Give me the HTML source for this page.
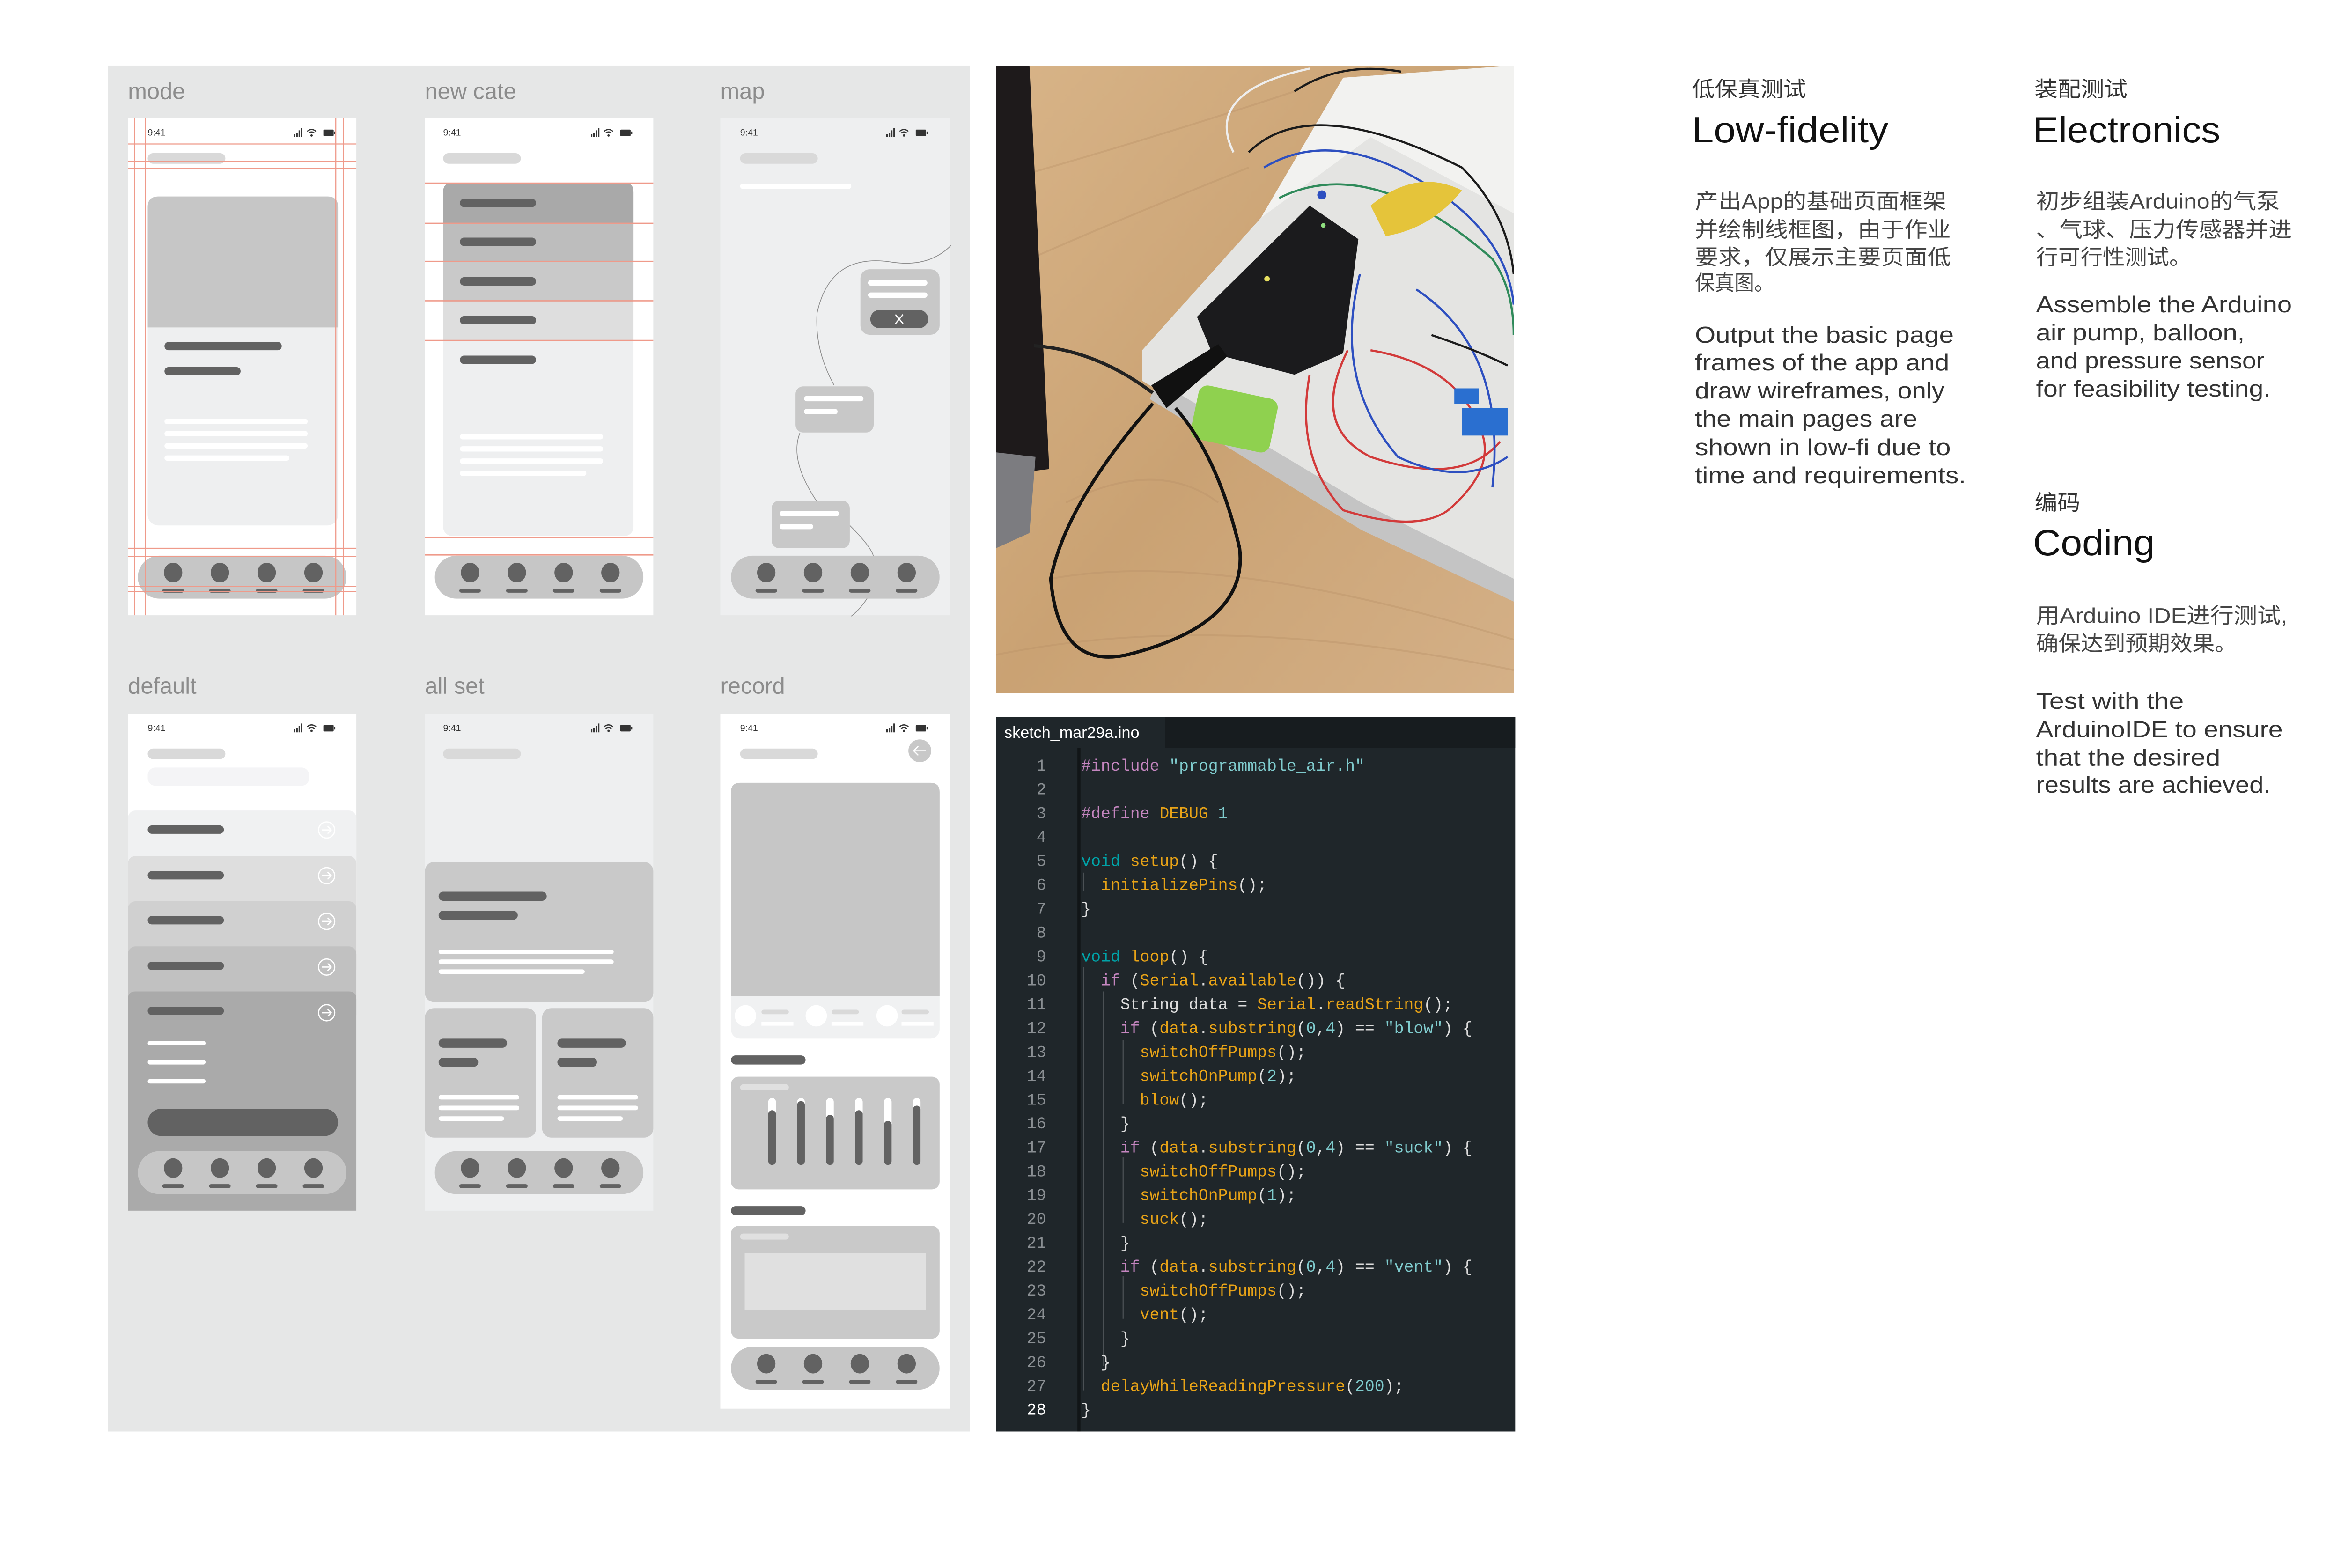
<!DOCTYPE html>
<html><head><meta charset="utf-8"><style>
html,body{margin:0;padding:0;background:#fff;width:5100px;height:3349px;overflow:hidden}
svg{display:block}
.lb{font-family:"Liberation Sans",sans-serif;font-size:15px;fill:#8c8c8c}
.st{font-family:"Liberation Sans",sans-serif;font-size:6px;fill:#333}
.cd{font-family:"Liberation Mono","DejaVu Sans Mono",monospace;font-size:10.7px;fill:#dcdcdc;white-space:pre}
.cd text{white-space:pre}
.ln{font-family:"Liberation Mono","DejaVu Sans Mono",monospace;font-size:10.7px;fill:#8a8f93;text-anchor:end}
.k{fill:#c586c0}.v{fill:#00a3a8}.f{fill:#e8a317}.s{fill:#7fcbcd}
.h{font-family:"Liberation Sans","Noto Sans CJK SC",sans-serif;font-size:14px;fill:#333}
.t{font-family:"Liberation Sans",sans-serif;font-size:24px;fill:#111}
.c{font-family:"Liberation Sans","Noto Sans CJK SC",sans-serif;font-size:14px;fill:#444}
.e{font-family:"Liberation Sans",sans-serif;font-size:15px;fill:#333}
</style></head><body>
<svg width="5100" height="3349" viewBox="0 0 1568 1029.6" xmlns="http://www.w3.org/2000/svg">
<defs>
<symbol id="ic" viewBox="0 0 30 6">
<rect x="0" y="4" width="1" height="2" fill="#333"/><rect x="1.6" y="3" width="1" height="3" fill="#333"/><rect x="3.2" y="1.5" width="1" height="4.5" fill="#333"/><rect x="4.8" y="0" width="1" height="6" fill="#333"/>
<path d="M9 2.2 Q12 -0.3 15 2.2 M10 3.4 Q12 1.8 14 3.4" stroke="#333" stroke-width="0.8" fill="none"/><circle cx="12" cy="5" r="0.8" fill="#333"/>
<rect x="20" y="1" width="7" height="4.4" fill="#333" rx="0.6"/><rect x="27.3" y="2.3" width="0.8" height="1.8" fill="#333"/>
</symbol>
<symbol id="tb" viewBox="0 0 136 28">
<rect x="0" y="0" width="136" height="28" rx="14" fill="#c6c6c6"/>
<g fill="#626262"><ellipse cx="23" cy="11" rx="6" ry="6.4"/><ellipse cx="53.5" cy="11" rx="6" ry="6.4"/><ellipse cx="84" cy="11" rx="6" ry="6.4"/><ellipse cx="114.5" cy="11" rx="6" ry="6.4"/>
<rect x="16" y="21.5" width="14" height="2.6" rx="1.3"/><rect x="46.5" y="21.5" width="14" height="2.6" rx="1.3"/><rect x="77" y="21.5" width="14" height="2.6" rx="1.3"/><rect x="107.5" y="21.5" width="14" height="2.6" rx="1.3"/></g>
</symbol>
<symbol id="ar" viewBox="0 0 12 12"><circle cx="6" cy="6" r="5.3" fill="none" stroke="#fff" stroke-width="0.8"/><path d="M3 6 H9 M6.6 3.6 L9 6 L6.6 8.4" fill="none" stroke="#fff" stroke-width="0.8"/></symbol>
<linearGradient id="wood" x1="0" y1="0" x2="1" y2="1"><stop offset="0" stop-color="#d8b488"/><stop offset="0.5" stop-color="#caa273"/><stop offset="1" stop-color="#d4b087"/></linearGradient>
</defs>
<rect x="0" y="0" width="1568" height="1030" fill="#fff"/>
<rect x="71" y="43" width="566" height="897" fill="#e6e7e7"/>
<text class="lb" x="84" y="65">mode</text><text class="lb" x="279" y="65">new cate</text><text class="lb" x="473" y="65">map</text>
<text class="lb" x="84" y="455.5">default</text><text class="lb" x="279" y="455.5">all set</text><text class="lb" x="473" y="455.5">record</text>

<g>
<rect x="84" y="77.5" width="150" height="326.5" fill="#fff"/>
<text class="st" x="97" y="89">9:41</text><use href="#ic" x="193" y="84" width="29" height="6"/>
<rect x="97" y="100.5" width="51" height="7" rx="3.5" fill="#d9d9d9"/>
<rect x="97" y="129" width="125" height="216" rx="7" fill="#eeeff0"/>
<path d="M97 215 V136 Q97 129 104 129 H215 Q222 129 222 136 V215 Z" fill="#c6c6c6"/>
<rect x="108" y="224.5" width="77" height="5.5" rx="2.7" fill="#626262"/>
<rect x="108" y="241" width="50" height="5.5" rx="2.7" fill="#626262"/>
<g fill="#fff"><rect x="108" y="275" width="94" height="3.5" rx="1.7"/><rect x="108" y="283" width="94" height="3.5" rx="1.7"/><rect x="108" y="291" width="94" height="3.5" rx="1.7"/><rect x="108" y="299" width="82" height="3.5" rx="1.7"/></g>
<use href="#tb" x="90.5" y="364.5" width="137" height="29"/>
<g stroke="#ef9a8a" stroke-width="0.7"><line x1="88.5" y1="77.5" x2="88.5" y2="404"/><line x1="95.5" y1="77.5" x2="95.5" y2="404"/><line x1="220.5" y1="77.5" x2="220.5" y2="404"/><line x1="225.5" y1="77.5" x2="225.5" y2="404"/>
<line x1="84" y1="94.5" x2="234" y2="94.5"/><line x1="84" y1="106" x2="234" y2="106"/><line x1="84" y1="110.5" x2="234" y2="110.5"/><line x1="84" y1="360" x2="234" y2="360"/><line x1="84" y1="365.5" x2="234" y2="365.5"/><line x1="84" y1="385" x2="234" y2="385"/><line x1="84" y1="388.5" x2="234" y2="388.5"/></g>
</g>

<g>
<rect x="279" y="77.5" width="150" height="326.5" fill="#fff"/>
<text class="st" x="291" y="89">9:41</text><use href="#ic" x="388" y="84" width="29" height="6"/>
<rect x="291" y="100.5" width="51" height="7" rx="3.5" fill="#d9d9d9"/>
<rect x="291" y="120" width="125" height="232" rx="6" fill="#eeeff0"/>
<path d="M291 224 V126 Q291 120 297 120 H410 Q416 120 416 126 V224 Z" fill="#dedede"/>
<path d="M291 198 V126 Q291 120 297 120 H410 Q416 120 416 126 V198 Z" fill="#c9c9c9"/>
<path d="M291 172 V126 Q291 120 297 120 H410 Q416 120 416 126 V172 Z" fill="#bdbdbd"/>
<path d="M291 146.5 V126 Q291 120 297 120 H410 Q416 120 416 126 V146.5 Z" fill="#a9a9a9"/>
<g fill="#626262"><rect x="302" y="130.5" width="50" height="5.5" rx="2.7"/><rect x="302" y="156" width="50" height="5.5" rx="2.7"/><rect x="302" y="182" width="50" height="5.5" rx="2.7"/><rect x="302" y="207.5" width="50" height="5.5" rx="2.7"/><rect x="302" y="233.5" width="50" height="5.5" rx="2.7"/></g>
<g fill="#fff"><rect x="302" y="285" width="94" height="3.5" rx="1.7"/><rect x="302" y="293" width="94" height="3.5" rx="1.7"/><rect x="302" y="301" width="94" height="3.5" rx="1.7"/><rect x="302" y="309" width="83" height="3.5" rx="1.7"/></g>
<use href="#tb" x="285.5" y="364.5" width="137" height="29"/>
<g stroke="#ef9a8a" stroke-width="0.8"><line x1="279" y1="120.2" x2="429" y2="120.2"/><line x1="279" y1="146.6" x2="429" y2="146.6"/><line x1="279" y1="171.6" x2="429" y2="171.6"/><line x1="279" y1="197.5" x2="429" y2="197.5"/><line x1="279" y1="223.5" x2="429" y2="223.5"/><line x1="279" y1="353" x2="429" y2="353"/><line x1="279" y1="364.4" x2="429" y2="364.4"/></g>
</g>

<g>
<rect x="473" y="77.5" width="151" height="326.5" fill="#eeeff0"/>
<text class="st" x="486" y="89">9:41</text><use href="#ic" x="582" y="84" width="29" height="6"/>
<rect x="486" y="100.5" width="51" height="7" rx="3.5" fill="#d9d9d9"/>
<rect x="486" y="120.5" width="73" height="3.5" rx="1.7" fill="#fff"/>
<path d="M624.6 161 Q610 176 585 172 Q545 166 536.5 205.7 Q535 230 547.6 252.7 M525.4 284 Q518 302 536.5 329.4 M558 345 Q573 360 573.7 366 M570 392 Q565 400 559 404.6" fill="none" stroke="#8d8d8d" stroke-width="0.5"/>
<rect x="565" y="176.8" width="52" height="43" rx="6" fill="#c8c8c8"/>
<rect x="570" y="184" width="39" height="3.5" rx="1.7" fill="#fff"/><rect x="570" y="192" width="39" height="3.5" rx="1.7" fill="#fff"/>
<rect x="571.5" y="203.5" width="38" height="12" rx="6" fill="#626262"/>
<path d="M588 206.5 L593 212.5 M593 206.5 L588 212.5" stroke="#fff" stroke-width="0.8"/>
<rect x="522.4" y="253.7" width="51.3" height="30.3" rx="5" fill="#c8c8c8"/>
<rect x="528" y="260" width="39" height="3.5" rx="1.7" fill="#fff"/><rect x="528" y="268.5" width="22" height="3.5" rx="1.7" fill="#fff"/>
<rect x="506.7" y="328.7" width="51.3" height="31.3" rx="5" fill="#c8c8c8"/>
<rect x="512" y="335.5" width="39" height="3.5" rx="1.7" fill="#fff"/><rect x="512" y="344" width="22" height="3.5" rx="1.7" fill="#fff"/>
<use href="#tb" x="480" y="364.5" width="137" height="29"/>
</g>

<g>
<rect x="84" y="469" width="150" height="326" fill="#fff"/>
<text class="st" x="97" y="480">9:41</text><use href="#ic" x="193" y="475" width="29" height="6"/>
<rect x="97" y="491.5" width="51" height="7" rx="3.5" fill="#d9d9d9"/>
<rect x="97" y="504" width="106" height="12" rx="5" fill="#f4f4f6"/>
<rect x="84" y="532.2" width="150" height="50" rx="5" fill="#f0f1f2"/>
<rect x="84" y="562" width="150" height="50" rx="5" fill="#dedede"/>
<rect x="84" y="591.8" width="150" height="50" rx="5" fill="#d0d0d0"/>
<rect x="84" y="621.4" width="150" height="50" rx="5" fill="#c1c1c1"/>
<path d="M84 795 V656 Q84 651 89 651 H229 Q234 651 234 656 V795 Z" fill="#aaaaaa"/>
<g fill="#626262"><rect x="97" y="542" width="50" height="5.5" rx="2.7"/><rect x="97" y="572" width="50" height="5.5" rx="2.7"/><rect x="97" y="601.5" width="50" height="5.5" rx="2.7"/><rect x="97" y="631.5" width="50" height="5.5" rx="2.7"/><rect x="97" y="661" width="50" height="5.5" rx="2.7"/></g>
<use href="#ar" x="208.5" y="539" width="12" height="12"/><use href="#ar" x="208.5" y="569" width="12" height="12"/><use href="#ar" x="208.5" y="599" width="12" height="12"/><use href="#ar" x="208.5" y="629" width="12" height="12"/><use href="#ar" x="208.5" y="659" width="12" height="12"/>
<g fill="#fff"><rect x="97" y="683.5" width="38" height="3" rx="1.5"/><rect x="97" y="696" width="38" height="3" rx="1.5"/><rect x="97" y="708.5" width="38" height="3" rx="1.5"/></g>
<rect x="97" y="728" width="125" height="18" rx="9" fill="#626262"/>
<use href="#tb" x="90.5" y="755.5" width="137" height="29"/>
</g>

<g>
<rect x="279" y="469" width="150" height="326" fill="#eeeff0"/>
<text class="st" x="291" y="480">9:41</text><use href="#ic" x="388" y="475" width="29" height="6"/>
<rect x="291" y="491.5" width="51" height="7" rx="3.5" fill="#d9d9d9"/>
<rect x="279" y="566" width="150" height="92" rx="6" fill="#c9c9c9"/>
<rect x="288" y="585.5" width="71" height="6" rx="3" fill="#626262"/><rect x="288" y="598" width="52" height="6" rx="3" fill="#626262"/>
<g fill="#fff"><rect x="288" y="623.5" width="115" height="3" rx="1.5"/><rect x="288" y="630" width="115" height="3" rx="1.5"/><rect x="288" y="636.5" width="96" height="3" rx="1.5"/></g>
<rect x="279" y="662" width="73" height="85" rx="6" fill="#c9c9c9"/><rect x="356" y="662" width="73" height="85" rx="6" fill="#c9c9c9"/>
<g fill="#626262"><rect x="288" y="682" width="45" height="6" rx="3"/><rect x="288" y="694.5" width="26" height="6" rx="3"/><rect x="366" y="682" width="45" height="6" rx="3"/><rect x="366" y="694.5" width="26" height="6" rx="3"/></g>
<g fill="#fff"><rect x="288" y="719" width="53" height="3" rx="1.5"/><rect x="288" y="726" width="53" height="3" rx="1.5"/><rect x="288" y="733" width="43" height="3" rx="1.5"/><rect x="366" y="719" width="53" height="3" rx="1.5"/><rect x="366" y="726" width="53" height="3" rx="1.5"/><rect x="366" y="733" width="43" height="3" rx="1.5"/></g>
<use href="#tb" x="285.5" y="755.5" width="137" height="29"/>
</g>

<g>
<rect x="473" y="469" width="151" height="456" fill="#fff"/>
<text class="st" x="486" y="480">9:41</text><use href="#ic" x="582" y="475" width="29" height="6"/>
<rect x="486" y="491.5" width="51" height="7" rx="3.5" fill="#d9d9d9"/>
<circle cx="604" cy="493" r="7.5" fill="#c8c8c8"/><path d="M600 493 H608 M603 490 L600 493 L603 496" stroke="#fff" stroke-width="0.8" fill="none"/>
<rect x="480" y="514" width="137" height="168" rx="6" fill="#f0f1f2"/>
<path d="M480 654 V520 Q480 514 486 514 H611 Q617 514 617 520 V654 Z" fill="#c6c6c6"/>
<g fill="#fff"><circle cx="489.5" cy="667" r="7"/><circle cx="536" cy="667" r="7"/><circle cx="582.5" cy="667" r="7"/>
<rect x="500" y="671" width="21" height="2.5"/><rect x="546" y="671" width="21" height="2.5"/><rect x="592" y="671" width="21" height="2.5"/></g>
<g fill="#d9d9d9"><rect x="500" y="663" width="18" height="3" rx="1.5"/><rect x="546" y="663" width="18" height="3" rx="1.5"/><rect x="592" y="663" width="18" height="3" rx="1.5"/></g>
<rect x="480" y="693" width="49" height="6" rx="3" fill="#626262"/>
<rect x="480" y="707" width="137" height="74" rx="5" fill="#c9c9c9"/>
<rect x="486" y="712" width="32" height="4" rx="2" fill="#e0e0e0"/>
<g><rect x="504.5" y="721" width="5" height="44" rx="2.5" fill="#fff"/><rect x="504.5" y="729" width="5" height="36" rx="2.5" fill="#626262"/>
<rect x="523.5" y="721" width="5" height="44" rx="2.5" fill="#fff"/><rect x="523.5" y="723" width="5" height="42" rx="2.5" fill="#626262"/>
<rect x="542.5" y="721" width="5" height="44" rx="2.5" fill="#fff"/><rect x="542.5" y="732" width="5" height="33" rx="2.5" fill="#626262"/>
<rect x="561.5" y="721" width="5" height="44" rx="2.5" fill="#fff"/><rect x="561.5" y="729" width="5" height="36" rx="2.5" fill="#626262"/>
<rect x="580.5" y="721" width="5" height="44" rx="2.5" fill="#fff"/><rect x="580.5" y="736" width="5" height="29" rx="2.5" fill="#626262"/>
<rect x="599.5" y="721" width="5" height="44" rx="2.5" fill="#fff"/><rect x="599.5" y="726" width="5" height="39" rx="2.5" fill="#626262"/></g>
<rect x="480" y="792" width="49" height="6" rx="3" fill="#626262"/>
<rect x="480" y="805" width="137" height="74" rx="5" fill="#c9c9c9"/>
<rect x="486" y="810" width="32" height="4" rx="2" fill="#e0e0e0"/>
<rect x="489" y="823" width="119" height="37" fill="#e0e0e0"/>
<use href="#tb" x="480" y="884" width="137" height="29"/>
</g>

<svg x="654" y="43" width="340" height="412" viewBox="654 43 340 412">
<rect x="654" y="43" width="340" height="412" fill="url(#wood)"/>
<g stroke="#b89066" stroke-width="1.2" opacity="0.35" fill="none"><path d="M654 120 Q760 90 850 60"/><path d="M654 180 Q720 150 820 110"/><path d="M690 380 Q800 360 994 420"/><path d="M654 430 Q800 400 994 440"/><path d="M700 330 Q760 300 800 330"/></g>
<path d="M654 43 H676 L689 308 L654 312 Z" fill="#1e1a1b"/>
<path d="M654 297 L680 300 L676 350 L654 360 Z" fill="#7c7c80"/>
<path d="M750 230 L828 143 L882 51 L994 43 L994 384 L894 335 L750 250 Z" fill="#e4e4e2"/>
<path d="M828 143 L882 51 L994 43 L994 140 L900 90 Z" fill="#f2f2f0"/>
<path d="M760 250 L894 330 L994 380 L994 395 L894 348 L755 262 Z" fill="#c4c4c4"/>
<path d="M786 208 L860 135 L892 157 L882 232 L850 246 L796 232 Z" fill="#1b1b1d"/>
<circle cx="832" cy="183" r="1.8" fill="#e8e060"/><circle cx="869" cy="148" r="1.5" fill="#8fe080"/>
<rect x="784" y="257" width="53" height="36" rx="6" fill="#8fd14f" transform="rotate(12 810 275)"/>
<path d="M757 265 Q700 330 690 380 Q695 440 740 430 Q820 410 814 360 Q800 300 772 268" fill="none" stroke="#111" stroke-width="2.2"/>
<path d="M679 227 Q720 230 757 258" fill="none" stroke="#222" stroke-width="2.2"/>
<path d="M756 253 L800 226 L806 234 L766 268 Z" fill="#111"/>
<g fill="none" stroke-width="1.4">
<path d="M860 246 Q850 300 882 335 Q930 350 951 335 Q980 310 974 287 Q960 240 900 230" stroke="#d23a3a"/>
<path d="M885 230 Q860 280 900 300 Q960 320 985 290" stroke="#d23a3a"/>
<path d="M893 180 Q875 250 918 300 Q960 320 990 300" stroke="#2d4fc0"/>
<path d="M930 190 Q990 230 980 320" stroke="#2d4fc0"/>
<path d="M830 110 Q880 80 950 130 Q990 160 994 200" stroke="#2d4fc0"/>
<path d="M820 100 Q860 60 960 110 Q990 140 994 180" stroke="#1b1b1b"/>
<path d="M850 60 Q880 40 920 47" stroke="#1b1b1b"/>
<path d="M840 130 Q900 100 980 170 Q994 190 994 220" stroke="#2f8a5a"/>
<path d="M810 100 Q790 60 860 45" stroke="#eee"/>
<path d="M940 220 Q970 230 990 240" stroke="#1b1b1b"/>
</g>
<rect x="960" y="268" width="30" height="18" fill="#2a6fd0"/>
<rect x="955" y="255" width="16" height="10" fill="#2a6fd0"/>
<path d="M900 135 Q930 110 960 125 Q940 150 910 155 Z" fill="#e5c43a"/>
<circle cx="868" cy="128" r="3" fill="#2d4fc0"/>
</svg>

<rect x="654" y="471" width="341" height="469" fill="#1f262a"/>
<rect x="654" y="471" width="341" height="20" fill="#171c1f"/>
<rect x="654" y="471" width="111" height="20" fill="#1f262a"/>
<text x="659.5" y="484.5" style="font-family:'Liberation Sans',sans-serif;font-size:10.5px;fill:#fff">sketch_mar29a.ino</text>
<rect x="707.5" y="491" width="2" height="449" fill="#111517"/>
<g stroke="#4b5155" stroke-width="0.7"><line x1="711.5" y1="573" x2="711.5" y2="585"/><line x1="711.5" y1="635" x2="711.5" y2="913"/><line x1="724.5" y1="651" x2="724.5" y2="897"/><line x1="737.5" y1="683" x2="737.5" y2="725"/><line x1="737.5" y1="760" x2="737.5" y2="803"/><line x1="737.5" y1="838" x2="737.5" y2="866"/></g>
<g class="ln">
<text x="687" y="506">1</text><text x="687" y="521.6">2</text><text x="687" y="537.3">3</text><text x="687" y="553">4</text><text x="687" y="568.6">5</text><text x="687" y="584.3">6</text><text x="687" y="600">7</text><text x="687" y="615.7">8</text><text x="687" y="631.3">9</text><text x="687" y="647">10</text><text x="687" y="662.7">11</text><text x="687" y="678.3">12</text><text x="687" y="694">13</text><text x="687" y="709.7">14</text><text x="687" y="725.4">15</text><text x="687" y="741">16</text><text x="687" y="756.7">17</text><text x="687" y="772.4">18</text><text x="687" y="788">19</text><text x="687" y="803.7">20</text><text x="687" y="819.4">21</text><text x="687" y="835">22</text><text x="687" y="850.7">23</text><text x="687" y="866.4">24</text><text x="687" y="882">25</text><text x="687" y="897.7">26</text><text x="687" y="913.4">27</text><text x="687" y="929" style="fill:#fff">28</text>
</g>
<g class="cd" xml:space="preserve">
<text x="710" y="506"><tspan class="k">#include</tspan> <tspan class="s">"programmable_air.h"</tspan></text>
<text x="710" y="537.3"><tspan class="k">#define</tspan> <tspan class="f">DEBUG</tspan> <tspan class="s">1</tspan></text>
<text x="710" y="568.6"><tspan class="v">void</tspan> <tspan class="f">setup</tspan>() {</text>
<text x="710" y="584.3">  <tspan class="f">initializePins</tspan>();</text>
<text x="710" y="600">}</text>
<text x="710" y="631.3"><tspan class="v">void</tspan> <tspan class="f">loop</tspan>() {</text>
<text x="710" y="647">  <tspan class="k">if</tspan> (<tspan class="f">Serial</tspan>.<tspan class="f">available</tspan>()) {</text>
<text x="710" y="662.7">    String data = <tspan class="f">Serial</tspan>.<tspan class="f">readString</tspan>();</text>
<text x="710" y="678.3">    <tspan class="k">if</tspan> (<tspan class="f">data</tspan>.<tspan class="f">substring</tspan>(<tspan class="s">0</tspan>,<tspan class="s">4</tspan>) == <tspan class="s">"blow"</tspan>) {</text>
<text x="710" y="694">      <tspan class="f">switchOffPumps</tspan>();</text>
<text x="710" y="709.7">      <tspan class="f">switchOnPump</tspan>(<tspan class="s">2</tspan>);</text>
<text x="710" y="725.4">      <tspan class="f">blow</tspan>();</text>
<text x="710" y="741">    }</text>
<text x="710" y="756.7">    <tspan class="k">if</tspan> (<tspan class="f">data</tspan>.<tspan class="f">substring</tspan>(<tspan class="s">0</tspan>,<tspan class="s">4</tspan>) == <tspan class="s">"suck"</tspan>) {</text>
<text x="710" y="772.4">      <tspan class="f">switchOffPumps</tspan>();</text>
<text x="710" y="788">      <tspan class="f">switchOnPump</tspan>(<tspan class="s">1</tspan>);</text>
<text x="710" y="803.7">      <tspan class="f">suck</tspan>();</text>
<text x="710" y="819.4">    }</text>
<text x="710" y="835">    <tspan class="k">if</tspan> (<tspan class="f">data</tspan>.<tspan class="f">substring</tspan>(<tspan class="s">0</tspan>,<tspan class="s">4</tspan>) == <tspan class="s">"vent"</tspan>) {</text>
<text x="710" y="850.7">      <tspan class="f">switchOffPumps</tspan>();</text>
<text x="710" y="866.4">      <tspan class="f">vent</tspan>();</text>
<text x="710" y="882">    }</text>
<text x="710" y="897.7">  }</text>
<text x="710" y="913.4">  <tspan class="f">delayWhileReadingPressure</tspan>(<tspan class="s">200</tspan>);</text>
<text x="710" y="929">}</text>
</g>

<text class="h" x="1111" y="63.3" textLength="75" lengthAdjust="spacingAndGlyphs">低保真测试</text>
<text class="t" x="1111" y="93.4" textLength="129" lengthAdjust="spacingAndGlyphs">Low-fidelity</text>
<text class="c" x="1113" y="137" textLength="165" lengthAdjust="spacingAndGlyphs">产出App的基础页面框架</text>
<text class="c" x="1113" y="155.5" textLength="168" lengthAdjust="spacingAndGlyphs">并绘制线框图，由于作业</text>
<text class="c" x="1113" y="173.7" textLength="168" lengthAdjust="spacingAndGlyphs">要求，仅展示主要页面低</text>
<text class="c" x="1113" y="190.6" textLength="52" lengthAdjust="spacingAndGlyphs">保真图。</text>
<text class="e" x="1113" y="225" textLength="170" lengthAdjust="spacingAndGlyphs">Output the basic page</text>
<text class="e" x="1113" y="243.2" textLength="167" lengthAdjust="spacingAndGlyphs">frames of the app and</text>
<text class="e" x="1113" y="261.6" textLength="164" lengthAdjust="spacingAndGlyphs">draw wireframes, only</text>
<text class="e" x="1113" y="280" textLength="146" lengthAdjust="spacingAndGlyphs">the main pages are</text>
<text class="e" x="1113" y="298.8" textLength="168" lengthAdjust="spacingAndGlyphs">shown in low-fi due to</text>
<text class="e" x="1113" y="317.3" textLength="178" lengthAdjust="spacingAndGlyphs">time and requirements.</text>

<text class="h" x="1336" y="63.3" textLength="61" lengthAdjust="spacingAndGlyphs">装配测试</text>
<text class="t" x="1335" y="93.4" textLength="123" lengthAdjust="spacingAndGlyphs">Electronics</text>
<text class="c" x="1337" y="137" textLength="160" lengthAdjust="spacingAndGlyphs">初步组装Arduino的气泵</text>
<text class="c" x="1337" y="155.5" textLength="168" lengthAdjust="spacingAndGlyphs">、气球、压力传感器并进</text>
<text class="c" x="1337" y="173.7" textLength="102" lengthAdjust="spacingAndGlyphs">行可行性测试。</text>
<text class="e" x="1337" y="205" textLength="168" lengthAdjust="spacingAndGlyphs">Assemble the Arduino</text>
<text class="e" x="1337" y="223.5" textLength="137" lengthAdjust="spacingAndGlyphs">air pump, balloon,</text>
<text class="e" x="1337" y="242" textLength="150" lengthAdjust="spacingAndGlyphs">and pressure sensor</text>
<text class="e" x="1337" y="260.4" textLength="154" lengthAdjust="spacingAndGlyphs">for feasibility testing.</text>
<text class="h" x="1336" y="335" textLength="30" lengthAdjust="spacingAndGlyphs">编码</text>
<text class="t" x="1335" y="364.6" textLength="80" lengthAdjust="spacingAndGlyphs">Coding</text>
<text class="c" x="1337" y="409" textLength="165" lengthAdjust="spacingAndGlyphs">用Arduino IDE进行测试,</text>
<text class="c" x="1337" y="427.3" textLength="132" lengthAdjust="spacingAndGlyphs">确保达到预期效果。</text>
<text class="e" x="1337" y="465.5" textLength="97" lengthAdjust="spacingAndGlyphs">Test with the</text>
<text class="e" x="1337" y="484" textLength="162" lengthAdjust="spacingAndGlyphs">ArduinoIDE to ensure</text>
<text class="e" x="1337" y="502.5" textLength="121" lengthAdjust="spacingAndGlyphs">that the desired</text>
<text class="e" x="1337" y="520.5" textLength="154" lengthAdjust="spacingAndGlyphs">results are achieved.</text>
</svg>
</body></html>
